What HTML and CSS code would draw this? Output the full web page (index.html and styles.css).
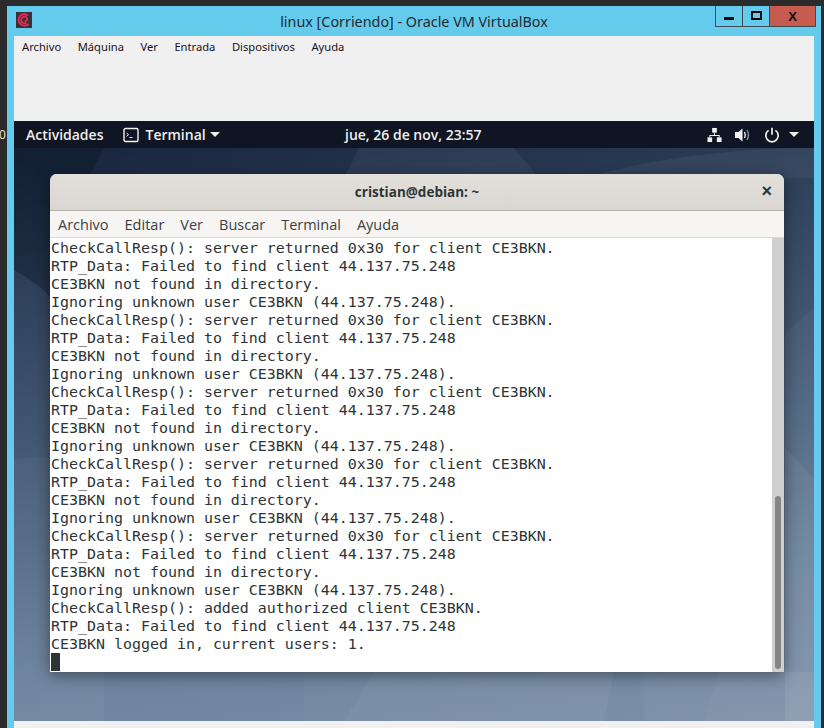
FILE: index.html
```html
<!DOCTYPE html>
<html lang="es">
<head>
<meta charset="utf-8">
<title>linux [Corriendo] - Oracle VM VirtualBox</title>
<link rel="stylesheet" href="styles.css">
</head>
<body>
<div class="edge-char">0</div>
<div class="vbox">
  <header class="vbox-title">
    <svg class="vbox-logo" viewBox="0 0 16 16"><rect width="16" height="16" fill="#3a3038"/><path d="M10.400 10.800c-2.200 1.100-4.900.1-5.200-2.500-.2-2.200 1.500-3.900 3.600-3.700 1.700.2 2.600 1.700 2.200 3.100-.3 1-1.300 1.500-2.300 1.200" fill="none" stroke="#ea2a55" stroke-width="1.800"/><path d="M12.800 11.800c-2.100 2.200-6 2.400-8.300.3C2.100 9.900 2 6 4.200 3.800c2-1.900 5.400-2.100 7.600-.3" fill="none" stroke="#ea2a55" stroke-width="1.800"/></svg>
    <span class="vbox-title-text">linux [Corriendo] - Oracle VM VirtualBox</span>
    <div class="win-buttons">
      <div class="win-btn win-min"><i></i></div>
      <div class="win-btn win-max"><i></i></div>
      <div class="win-btn win-close">X</div>
    </div>
  </header>
  <div class="vbox-inner">
    <nav class="vbox-menu">
      <span>Archivo</span><span>Máquina</span><span>Ver</span><span>Entrada</span><span>Dispositivos</span><span>Ayuda</span>
    </nav>
    <div class="gnome-panel">
      <div class="panel-left">
        <span class="activities">Actividades</span>
        <span class="app-menu">
          <svg class="term-icon" viewBox="0 0 16 16"><rect x="1" y="1.500" width="14" height="13" rx="1.500" fill="none" stroke="#f2f2f2" stroke-width="1.400"/><path d="M3.500 6l2 1.700-2 1.700" fill="none" stroke="#f2f2f2" stroke-width="1"/><path d="M6.500 10.500h3" stroke="#f2f2f2" stroke-width="1"/></svg>
          <span>Terminal</span>
          <i class="caret"></i>
        </span>
      </div>
      <span class="clock">jue, 26 de nov, 23:57</span>
      <div class="panel-right">
        <svg class="net-icon" viewBox="0 0 16 16" fill="#f2f2f2"><rect x="5.500" y="0.500" width="5" height="5"/><rect x="0.500" y="10.500" width="5" height="5"/><rect x="10.500" y="10.500" width="5" height="5"/><path d="M7.500 5.500h1V8H13.500v2.500h-1V9h-9v1.500h-1V8h5z"/></svg>
        <svg class="vol-icon" viewBox="0 0 16 16"><path d="M0 5h3.500L7.500 1.500v13L3.500 11H0z" fill="#f2f2f2"/><path d="M9.500 5c1 1.800 1 4.200 0 6" fill="none" stroke="#f2f2f2" stroke-width="1.400"/><path d="M12 3c1.800 3 1.800 7 0 10" fill="none" stroke="#8a8f98" stroke-width="1.400"/></svg>
        <svg class="pow-icon" viewBox="0 0 16 16"><path d="M4.600 3.400a6.200 6.200 0 1 0 6.800 0" fill="none" stroke="#f2f2f2" stroke-width="1.700"/><path d="M8 .8v7" stroke="#f2f2f2" stroke-width="1.700"/></svg>
        <i class="caret"></i>
      </div>
    </div>
    <main class="desktop">
      <svg class="wall" viewBox="0 0 800 573" preserveAspectRatio="none">
        <path d="M0 122C14 130 30 140 36 150V26H76L90 0H0z" fill="#0b1626" opacity=".4"/>
        <path d="M330 30L345 0H500L525 30z" fill="#fff" opacity=".05"/>
        <path d="M570 30C640 10 720 0 800 0V30z" fill="#fff" opacity=".05"/>
        <path d="M771 185L800 160V573H771z" fill="#fff" opacity=".04"/>
        <path d="M771 300L800 330V573H771z" fill="#fff" opacity=".05"/>
        <path d="M0 312C30 306 60 310 90 320V573H0z" fill="#fff" opacity=".04"/>
        <path d="M290 573V524H360L330 573z" fill="#fff" opacity=".02"/>
        <path d="M330 573L360 524H600L590 573z" fill="#fff" opacity=".05"/>
        <path d="M630 573V524H800V573z" fill="#fff" opacity=".03"/>
        <path d="M690 573L705 524H800V573z" fill="#fff" opacity=".03"/>
      </svg>
      <section class="term">
        <header class="term-head">
          <span class="term-title">cristian@debian: ~</span>
          <span class="term-x">×</span>
        </header>
        <nav class="term-menu">
          <span>Archivo</span><span>Editar</span><span>Ver</span><span>Buscar</span><span>Terminal</span><span>Ayuda</span>
        </nav>
        <div class="term-body">
          <pre class="term-text">CheckCallResp(): server returned 0x30 for client CE3BKN.
RTP_Data: Failed to find client 44.137.75.248
CE3BKN not found in directory.
Ignoring unknown user CE3BKN (44.137.75.248).
CheckCallResp(): server returned 0x30 for client CE3BKN.
RTP_Data: Failed to find client 44.137.75.248
CE3BKN not found in directory.
Ignoring unknown user CE3BKN (44.137.75.248).
CheckCallResp(): server returned 0x30 for client CE3BKN.
RTP_Data: Failed to find client 44.137.75.248
CE3BKN not found in directory.
Ignoring unknown user CE3BKN (44.137.75.248).
CheckCallResp(): server returned 0x30 for client CE3BKN.
RTP_Data: Failed to find client 44.137.75.248
CE3BKN not found in directory.
Ignoring unknown user CE3BKN (44.137.75.248).
CheckCallResp(): server returned 0x30 for client CE3BKN.
RTP_Data: Failed to find client 44.137.75.248
CE3BKN not found in directory.
Ignoring unknown user CE3BKN (44.137.75.248).
CheckCallResp(): added authorized client CE3BKN.
RTP_Data: Failed to find client 44.137.75.248
CE3BKN logged in, current users: 1.
<span class="cursor"></span></pre>
          <div class="scrollbar"><div class="thumb"></div></div>
        </div>
      </section>
    </main>
    <div class="status-strip"></div>
  </div>
</div>
</body>
</html>
```
FILE: styles.css
```css
* { box-sizing: border-box; }
html, body { margin: 0; height: 728px; overflow: hidden; }
body { background: #2b2b2b; padding: 6px 3px 0 7px; position: relative; font-family: "Noto Sans", sans-serif; }
.edge-char { position: absolute; left: -1px; top: 127px; color: #e8e0c8; font: 12px/16px "Noto Sans", sans-serif; }
.vbox { height: 722px; background: #65cbed; padding: 0 7px; display: flex; flex-direction: column; }
.vbox-title { height: 30px; flex: none; display: flex; align-items: center; justify-content: center; position: relative; }
.vbox-logo { position: absolute; left: 2px; top: 6px; width: 16px; height: 16px; }
.vbox-title-text { font: 14.35px "Noto Sans", sans-serif; color: #1f2a30; }
.win-buttons { position: absolute; right: -2px; top: 0; height: 21px; display: flex; border: 1px solid #3c4a52; border-top: 0; }
.win-btn { height: 20px; display: flex; align-items: center; justify-content: center; }
.win-min { width: 27px; border-right: 1px solid #3c4a52; }
.win-min i { width: 10px; height: 3px; background: #0a0a0a; margin-top: 4px; }
.win-max { width: 26px; }
.win-max i { width: 11px; height: 9px; border: 2px solid #0a0a0a; margin-top: -2px; }
.win-close { width: 46px; background: #c75b4f; border-left: 1px solid #3c4a52; font: bold 13px "Liberation Sans", sans-serif; color: #111; }
.vbox-inner { flex: 1; display: flex; flex-direction: column; min-height: 0; }
.vbox-menu { height: 85px; flex: none; background: #f0f0f0; display: flex; gap: 16.5px; padding: 2px 0 0 8px; font: 11.2px/17px "Noto Sans", sans-serif; color: #1c1020; align-items: flex-start; }
.gnome-panel { height: 27px; flex: none; background: #0f1522; color: #eeeeec; display: flex; align-items: center; position: relative; font: 600 14px "Open Sans", sans-serif; }
.panel-left { display: flex; align-items: center; padding-left: 12px; gap: 20px; }
.app-menu { display: flex; align-items: center; gap: 6px; }
.term-icon { width: 16px; height: 16px; }
.app-menu .caret { margin-left: -2px; }
.caret { display: inline-block; width: 0; height: 0; border-left: 5px solid transparent; border-right: 5px solid transparent; border-top: 5px solid #eeeeec; }
.clock { position: absolute; left: 331px; top: 4px; line-height: 19px; }
.panel-right { margin-left: auto; display: flex; align-items: center; padding-right: 15px; }
.net-icon { width: 15px; height: 16px; margin-right: 13px; }
.vol-icon { width: 16px; height: 16px; margin-right: 13px; }
.pow-icon { width: 16px; height: 16px; margin-right: 9px; }
.desktop { flex: 1; min-height: 0; position: relative; padding: 26px 30px 0 36px; background: linear-gradient(172deg, #17243b 0%, #2c3e58 18%, #4a5f7b 50%, #6b829d 78%, #7d91a9 100%); }
.wall { position: absolute; inset: 0; width: 100%; height: 100%; }
.term { position: relative; width: 734px; height: 498px; border-radius: 7px 7px 0 0; background: #f6f5f4; display: flex; flex-direction: column; box-shadow: 0 3px 16px rgba(0,0,0,.45); overflow: hidden; }
.term-head { height: 37px; flex: none; background: linear-gradient(#e3e0dc, #dad7d2); border-bottom: 1px solid #b6b2ac; display: flex; align-items: center; justify-content: center; position: relative; }
.term-title { font: 700 13.5px "Open Sans", sans-serif; color: #2e3436; }
.term-x { position: absolute; right: 12px; top: 5px; font: 700 18px/24px "Liberation Sans", sans-serif; color: #2e3436; }
.term-menu { height: 27px; flex: none; display: flex; gap: 16px; padding-left: 8px; align-items: center; font: 14.5px "Open Sans", sans-serif; color: #3a3f41; border-bottom: 1px solid #dcdad7; }
.term-body { flex: 1; min-height: 0; display: flex; background: #fff; }
.term-text { flex: 1; margin: 0; padding: 1px 0 0 1px; font: 14.95px/18px "DejaVu Sans Mono", monospace; color: #2e3436; overflow: hidden; }
.cursor { display: block; width: 9px; height: 18px; background: #2e3436; }
.scrollbar { width: 12px; flex: none; background: #cfcfcf; position: relative; }
.thumb { position: absolute; left: 3px; top: 258px; bottom: 3px; width: 6px; border-radius: 3px; background: #858585; }
.status-strip { height: 7px; flex: none; background: #f0f0f0; }
```
